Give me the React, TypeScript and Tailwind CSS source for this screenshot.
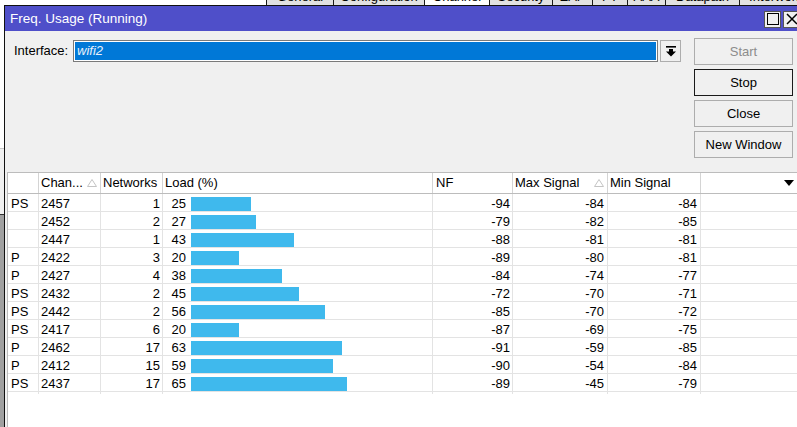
import React from "react";

const rows: [string, string, number, number, number, number, number][] = [
  ["PS", "2457", 1, 25, -94, -84, -84],
  ["", "2452", 2, 27, -79, -82, -85],
  ["", "2447", 1, 43, -88, -81, -81],
  ["P", "2422", 3, 20, -89, -80, -81],
  ["P", "2427", 4, 38, -84, -74, -77],
  ["PS", "2432", 2, 45, -72, -70, -71],
  ["PS", "2442", 2, 56, -85, -70, -72],
  ["PS", "2417", 6, 20, -87, -69, -75],
  ["P", "2462", 17, 63, -91, -59, -85],
  ["P", "2412", 15, 59, -90, -54, -84],
  ["PS", "2437", 17, 65, -89, -45, -79],
];

const tabs = [
  { name: "General", w: "w-[67px]" },
  { name: "Configuration", w: "w-[91px]" },
  { name: "Channel", w: "w-[65px]", active: true },
  { name: "Security", w: "w-[63px]" },
  { name: "EAP", w: "w-[40px]" },
  { name: "FT", w: "w-[35px]" },
  { name: "AAA", w: "w-[38px]" },
  { name: "Datapath", w: "w-[74px]" },
  { name: "Interworking", w: "w-[90px]" },
];

const cols = "grid grid-cols-[31px_62px_62px_270px_80px_95px_93px_1fr]";

function SortMark() {
  return (
    <svg width="10" height="8" viewBox="0 0 10 8">
      <polygon points="5,0.5 9.5,7.5 0.5,7.5" fill="none" stroke="#c4c4c4" strokeWidth="1" />
    </svg>
  );
}

function WinButton({ children, dark, disabled }: { children: React.ReactNode; dark?: boolean; disabled?: boolean }) {
  return (
    <div
      className={`h-[27px] flex items-center justify-center border bg-[#f0f0f0] ${
        dark ? "border-[#1a1a1a]" : "border-[#adadad]"
      } ${disabled ? "text-[#8c8c8c]" : "text-black"}`}
    >
      {children}
    </div>
  );
}

export default function App() {
  return (
    <div className="w-[797px] h-[427px] overflow-hidden flex flex-col bg-white text-[13px] text-black font-['Liberation_Sans',Arial,sans-serif]">
      {/* tabs of the window behind, mostly hidden */}
      <div className="h-[5px] flex items-end overflow-hidden bg-white shrink-0">
        <div className="w-[266px] shrink-0" />
        {tabs.map((t) => (
          <div
            key={t.name}
            className={`${t.w} shrink-0 h-[18px] flex items-end justify-center leading-[14px] pb-[1px] border-l border-[#1a1a1a] ${
              t.active ? "bg-white" : "bg-[#e1e1e1]"
            }`}
          >
            {t.name}
          </div>
        ))}
      </div>

      <div className="flex-1 flex min-h-0">
        {/* strip of the window behind */}
        <div className="w-[4px] shrink-0 flex flex-col">
          <div className="h-[143px] bg-white" />
          <div className="h-[66px] bg-[#f0f0f0] border-t border-[#c8c8c8]" />
          <div className="flex-1 bg-[#a0a0a0] border-t border-[#303030]" />
        </div>

        {/* Freq. Usage window */}
        <div className="flex-1 flex flex-col border-l border-t border-[#111] bg-[#f0f0f0] min-w-0">
          <div className="h-[25px] shrink-0 bg-[#4f4fc9] flex items-center justify-between pl-[5px]">
            <span className="text-white text-[13.5px] pt-[2px]">Freq. Usage (Running)</span>
            <div className="flex gap-[2px] mr-[-3px] pt-[1px]">
              <div className="w-[17px] h-[17px] bg-[#f0f0f0] border border-[#555] flex items-center justify-center">
                <div className="w-[12px] h-[12px] border border-black" />
              </div>
              <div className="w-[17px] h-[17px] bg-[#f0f0f0] border border-[#555] flex items-center justify-center">
                <svg width="12" height="12" viewBox="0 0 12 12">
                  <path d="M1 1 L11 11 M11 1 L1 11" stroke="#000" strokeWidth="1.5" />
                </svg>
              </div>
            </div>
          </div>

          {/* controls */}
          <div className="h-[141px] shrink-0 flex pl-[9px]">
            <div className="flex items-center h-[22px] mt-[9px]">
              <span className="w-[59px]">Interface:</span>
              <div className="w-[585px] h-[22px] border border-[#7a7a7a]">
                <div className="h-full border border-white bg-[#0078d7] flex items-center pl-[2px]">
                  <span className="italic text-[#e8f0fa]">wifi2</span>
                </div>
              </div>
              <div className="ml-[2px] w-[21px] h-[22px] border border-[#adadad] bg-[#f0f0f0] flex items-center justify-center">
                <svg width="10" height="11" viewBox="0 0 10 11">
                  <rect x="0" y="0" width="10" height="1.6" fill="#000" />
                  <polygon points="3,3 7,3 7,5.5 10,5.5 5,10.5 0,5.5 3,5.5" fill="#000" />
                </svg>
              </div>
            </div>
            <div className="ml-[13px] mt-[7px] w-[99px] flex flex-col gap-[4px]">
              <WinButton disabled>Start</WinButton>
              <WinButton dark>Stop</WinButton>
              <WinButton>Close</WinButton>
              <WinButton>New Window</WinButton>
            </div>
          </div>

          {/* table */}
          <div className="flex-1 ml-[2px] bg-white border-l border-t border-[#bcbcbc] min-h-0">
            <div className={`${cols} h-[21px] border-b border-[#bcbcbc]`}>
              <div className="border-r border-[#d4d4d4]" />
              <div className="border-r border-[#d4d4d4] flex items-center justify-between pl-[2px] pr-[3px]">
                <span>Chan...</span>
                <SortMark />
              </div>
              <div className="border-r border-[#d4d4d4] flex items-center pl-[2px]">Networks</div>
              <div className="border-r border-[#d4d4d4] flex items-center pl-[2px]">Load (%)</div>
              <div className="border-r border-[#d4d4d4] flex items-center pl-[3px]">NF</div>
              <div className="border-r border-[#d4d4d4] flex items-center justify-between pl-[2px] pr-[3px]">
                <span>Max Signal</span>
                <SortMark />
              </div>
              <div className="border-r border-[#d4d4d4] flex items-center pl-[2px]">Min Signal</div>
              <div className="flex items-center justify-end pr-[3px]">
                <svg width="10" height="6" viewBox="0 0 10 6">
                  <polygon points="0,0 10,0 5,6" fill="#000" />
                </svg>
              </div>
            </div>

            {rows.map(([flag, chan, nets, load, nf, max, min]) => (
              <div key={chan} className={`${cols} h-[18px] border-b border-[#e3e3e3]`}>
                <div className="border-r border-[#e3e3e3] flex items-center pl-[3px]">{flag}</div>
                <div className="border-r border-[#e3e3e3] flex items-center pl-[2px]">{chan}</div>
                <div className="border-r border-[#e3e3e3] flex items-center justify-end pr-[2px]">{nets}</div>
                <div className="border-r border-[#e3e3e3] flex items-center">
                  <span className="w-[23px] text-right">{load}</span>
                  <div className="ml-[5px] h-[14px] bg-[#3fb9ed]" style={{ width: load * 2.4 }} />
                </div>
                <div className="border-r border-[#e3e3e3] flex items-center justify-end pr-[2px]">{nf}</div>
                <div className="border-r border-[#e3e3e3] flex items-center justify-end pr-[3px]">{max}</div>
                <div className="border-r border-[#e3e3e3] flex items-center justify-end pr-[3px]">{min}</div>
                <div />
              </div>
            ))}
          </div>
        </div>
      </div>
    </div>
  );
}
